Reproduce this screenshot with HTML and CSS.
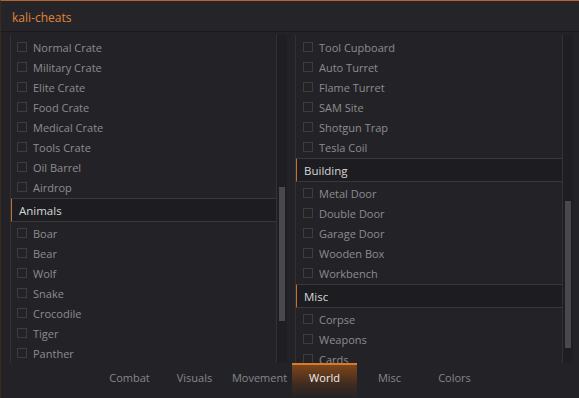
FILE: index.html
```html
<!DOCTYPE html>
<html lang="en">
<head>
    <meta charset="UTF-8">
    <title>kali-cheats</title>
    <link rel="stylesheet" href="styles.css">
</head>
<body>
    <div class="ventana">
        <div class="titulo">kali-cheats</div>

        <div class="contenido">
            <!-- columna izquierda -->
            <div class="columna">
                <div class="lista">
                    <div class="item"><span class="check"></span>Normal Crate</div>
                    <div class="item"><span class="check"></span>Military Crate</div>
                    <div class="item"><span class="check"></span>Elite Crate</div>
                    <div class="item"><span class="check"></span>Food Crate</div>
                    <div class="item"><span class="check"></span>Medical Crate</div>
                    <div class="item"><span class="check"></span>Tools Crate</div>
                    <div class="item"><span class="check"></span>Oil Barrel</div>
                    <div class="item"><span class="check"></span>Airdrop</div>
                    <div class="cabecera">Animals</div>
                    <div class="item"><span class="check"></span>Boar</div>
                    <div class="item"><span class="check"></span>Bear</div>
                    <div class="item"><span class="check"></span>Wolf</div>
                    <div class="item"><span class="check"></span>Snake</div>
                    <div class="item"><span class="check"></span>Crocodile</div>
                    <div class="item"><span class="check"></span>Tiger</div>
                    <div class="item"><span class="check"></span>Panther</div>
                </div>
                <div class="scroll"><div class="barra barra-izq"></div></div>
            </div>

            <!-- columna derecha -->
            <div class="columna">
                <div class="lista">
                    <div class="item"><span class="check"></span>Tool Cupboard</div>
                    <div class="item"><span class="check"></span>Auto Turret</div>
                    <div class="item"><span class="check"></span>Flame Turret</div>
                    <div class="item"><span class="check"></span>SAM Site</div>
                    <div class="item"><span class="check"></span>Shotgun Trap</div>
                    <div class="item"><span class="check"></span>Tesla Coil</div>
                    <div class="cabecera">Building</div>
                    <div class="item"><span class="check"></span>Metal Door</div>
                    <div class="item"><span class="check"></span>Double Door</div>
                    <div class="item"><span class="check"></span>Garage Door</div>
                    <div class="item"><span class="check"></span>Wooden Box</div>
                    <div class="item"><span class="check"></span>Workbench</div>
                    <div class="cabecera">Misc</div>
                    <div class="item"><span class="check"></span>Corpse</div>
                    <div class="item"><span class="check"></span>Weapons</div>
                    <div class="item"><span class="check"></span>Cards</div>
                </div>
                <div class="scroll"><div class="barra barra-der"></div></div>
            </div>
        </div>

        <div class="tabs">
            <div class="tab">Combat</div>
            <div class="tab">Visuals</div>
            <div class="tab">Movement</div>
            <div class="tab activo">World</div>
            <div class="tab">Misc</div>
            <div class="tab">Colors</div>
        </div>
    </div>
</body>
</html>
```

FILE: styles.css
```css
* {
    margin: 0;
    padding: 0;
    box-sizing: border-box;
}

body {
    background: #232327;
    width: 579px;
    height: 398px;
    overflow: hidden;
    font-family: "Open Sans", "Noto Sans", sans-serif;
    font-size: 11px;
}

.ventana {
    width: 579px;
    height: 398px;
    display: flex;
    flex-direction: column;
    border-top: 1px solid #b8632a;
    border-left: 1px solid #3a2a20;
}

.titulo {
    height: 31px;
    flex-shrink: 0;
    background: #252529;
    border-bottom: 1px solid #1a1a1d;
    color: #e0843a;
    font-size: 12px;
    line-height: 33px;
    padding-left: 11px;
}

.contenido {
    height: 331px;
    flex-shrink: 0;
    display: flex;
    gap: 8px;
    padding: 3px 0 0 9px;
    background: #232327;
    overflow: hidden;
}

.columna {
    display: flex;
    height: 100%;
}

.lista {
    width: 267px;
    padding-top: 2px;
    border-left: 1px solid #323236;
    border-right: 1px solid #323236;
    overflow: hidden;
}

.columna:last-child .lista {
    width: 268px;
}

.item {
    height: 20px;
    display: flex;
    align-items: center;
    gap: 6px;
    padding-left: 6px;
    color: #8c8c90;
    white-space: nowrap;
}

.check {
    width: 10px;
    height: 10px;
    border: 1px solid #3c3c41;
    flex-shrink: 0;
}

.columna:last-child .item {
    padding-left: 7px;
}

.cabecera {
    height: 24px;
    margin: 1px 0 1px -1px;
    background: #1d1d21;
    border-top: 1px solid #38383d;
    border-bottom: 1px solid #38383d;
    border-left: 2px solid #c8702e;
    color: #d6d6d8;
    font-size: 11.5px;
    line-height: 23px;
    padding-left: 7px;
}

.scroll {
    width: 10px;
    height: 100%;
    background: #1f1f23;
    padding: 0 2px;
}

.barra {
    width: 6px;
    background: #48484d;
}

.barra-izq {
    margin-top: 152px;
    height: 134px;
}

.barra-der {
    margin-top: 166px;
    height: 147px;
}

.tabs {
    flex: 1;
    display: flex;
    justify-content: center;
    background: #232327;
    padding-left: 4px;
}

.tab {
    width: 65px;
    text-align: center;
    color: #86868a;
    font-size: 11px;
    padding-top: 5px;
    border-top: 2px solid transparent;
}

.tab.activo {
    color: #f0f0f0;
    border-top-color: #d87a30;
    background: linear-gradient(#7e4519, rgba(110, 56, 20, 0.35) 60%, rgba(35, 35, 39, 0));
}
```
